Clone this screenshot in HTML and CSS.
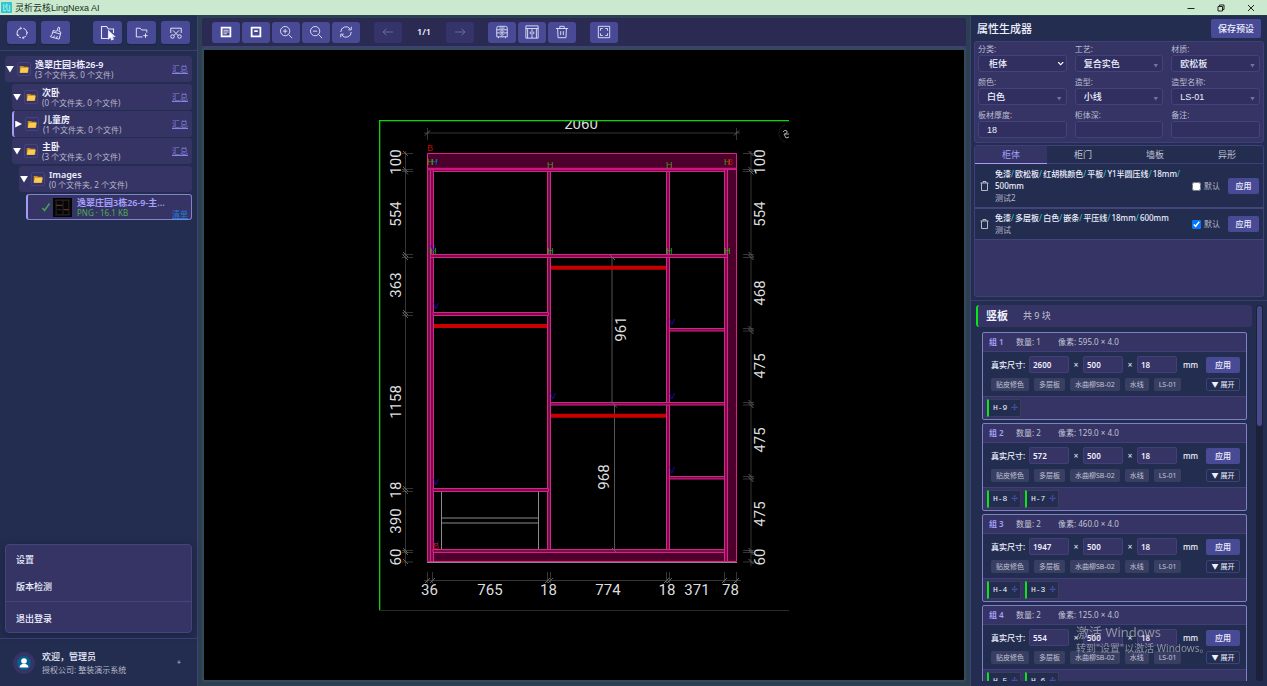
FILE: index.html
```html
<!DOCTYPE html>
<html lang="zh-CN">
<head>
<meta charset="utf-8">
<title>灵析云核LingNexa AI</title>
<link rel="stylesheet" href="styles.css">
</head>
<body>
<header class="titlebar">
  <svg class="app-logo" viewBox="0 0 12 12"><rect width="12" height="12" rx="1" fill="#35c4cf"/><path d="M3 2v8M3 9.500h2.500M6.500 2l-2 4M6.500 2.500v6l3 1.500V3.500" stroke="#a9f2f1" fill="none"/></svg>
  <span class="app-name">灵析云核LingNexa AI</span>
  <div class="window-controls">
    <button aria-label="最小化"><svg viewBox="0 0 10 10"><path d="M1.500 5.500h7"/></svg></button>
    <button aria-label="还原"><svg viewBox="0 0 10 10"><path d="M2 3.500h4.500V8H2zM3.500 3.500V2H8v4.500H6.500"/></svg></button>
    <button aria-label="关闭"><svg viewBox="0 0 10 10"><path d="M2 2l6 6M8 2L2 8"/></svg></button>
  </div>
</header>
<div class="app">
  <aside class="sidebar">
    <div class="side-tools">
      <button aria-label="刷新"><svg viewBox="0 0 16 16"><path d="M3.200 11A5.600 5.600 0 0 1 7 2.500M9.500 2.600a5.600 5.600 0 0 1 3.700 7.400M12.700 11A5.600 5.600 0 0 1 9 13.500M6.800 13.500a5.600 5.600 0 0 1-2.500-1.200M6 1.200l1.500 1.300L6 4M10 15l-1.500-1.500L10 12M2 9.500l1.200 1.700 1.600-1M14.500 7l-1 1.500"/></svg></button>
      <button aria-label="清理"><svg viewBox="0 0 16 16"><path d="M9.500 5.500l.8-3.800q1.200-1 2 .3l-1 4.200 2.200.8-.4 2.200-8.800-2.400.6-1.800q2.500 1.500 4.600.5zM4.300 6.800Q4 10 1.500 12.200L11.500 15l1.600-5.800M5 13l1.500-2.200M8.500 14l1-2.500"/></svg></button>
      <button class="side-gap" aria-label="打开文件夹"><svg class="wide" viewBox="0 0 16 16"><path d="M8.500 13.500h-7v-12h5l2 2.500h5v4"/><path class="solid" d="M8.500 6l6 5.500-2.300.2 1 2.500-1.500.6-1.100-2.500-2.100 1.500z"/></svg></button>
      <button aria-label="新建文件夹"><svg viewBox="0 0 16 16"><path d="M8.500 12.500h-7v-10h4.500l1.500 2h6v3M12 8.500v5M9.500 11h5"/></svg></button>
      <button aria-label="剪切"><svg viewBox="0 0 16 16"><path d="M2 8V2.500h12V8M4.500 5l6 6M11.500 5l-6 6"/><circle cx="4" cy="12" r="2"/><circle cx="12" cy="12" r="2"/></svg></button>
    </div>
    <ul class="tree">
      <li>
        <div class="node"><i class="caret open"></i><svg class="folder" viewBox="0 0 14 14"><path d="M2 3.500h4l1 1h5v7H2z" fill="#c98c1d"/><path d="M3.500 5.500h9L11 11.500H2z" fill="#fccb57"/></svg><div class="node-text"><b>逸翠庄园3栋26-9</b><span>(3 个文件夹, 0 个文件)</span></div><a href="#">汇总</a></div>
        <ul>
          <li><div class="node"><i class="caret open"></i><svg class="folder" viewBox="0 0 14 14"><path d="M2 3.500h4l1 1h5v7H2z" fill="#c98c1d"/><path d="M3.500 5.500h9L11 11.500H2z" fill="#fccb57"/></svg><div class="node-text"><b>次卧</b><span>(0 个文件夹, 0 个文件)</span></div><a href="#">汇总</a></div></li>
          <li><div class="node current"><i class="caret"></i><svg class="folder" viewBox="0 0 14 14"><path d="M2 3.500h4l1 1h5v7H2z" fill="#c98c1d"/><path d="M3.500 5.500h9L11 11.500H2z" fill="#fccb57"/></svg><div class="node-text"><b>儿童房</b><span>(1 个文件夹, 0 个文件)</span></div><a href="#">汇总</a></div></li>
          <li>
            <div class="node"><i class="caret open"></i><svg class="folder" viewBox="0 0 14 14"><path d="M2 3.500h4l1 1h5v7H2z" fill="#c98c1d"/><path d="M3.500 5.500h9L11 11.500H2z" fill="#fccb57"/></svg><div class="node-text"><b>主卧</b><span>(3 个文件夹, 0 个文件)</span></div><a href="#">汇总</a></div>
            <ul>
              <li>
                <div class="node"><i class="caret open"></i><svg class="folder" viewBox="0 0 14 14"><path d="M2 3.500h4l1 1h5v7H2z" fill="#c98c1d"/><path d="M3.500 5.500h9L11 11.500H2z" fill="#fccb57"/></svg><div class="node-text"><b>Images</b><span>(0 个文件夹, 2 个文件)</span></div></div>
                <ul>
                  <li><div class="node file"><svg class="tick" viewBox="0 0 10 10"><path d="M1.500 6l2 2.500L8.500 1.500"/></svg><svg class="thumb" viewBox="0 0 18 18"><rect width="18" height="18" fill="#050505"/><path d="M2 2h14M2 16h14M3 2v14M9.500 2v14M15 2v14M4 11h4" stroke="#242424" fill="none"/><path d="M3 7h6M10 11h5" stroke="#64322c" fill="none"/></svg><div class="node-text"><b>逸翠庄园3栋26-9-主...</b><span>PNG · 16.1 KB</span></div><a href="#">清单</a></div></li>
                </ul>
              </li>
            </ul>
          </li>
        </ul>
      </li>
    </ul>
    <nav class="menu">
      <button>设置</button>
      <button>版本检测</button>
      <button class="logout">退出登录</button>
    </nav>
    <div class="user">
      <svg class="avatar" viewBox="0 0 22 22"><circle cx="11" cy="11" r="11" fill="#353464"/><circle cx="11" cy="11" r="7" fill="#075d8d"/><circle cx="11" cy="9" r="2.800" fill="#fff"/><path d="M6.500 15.500c0-5 9-5 9 0z" fill="#fff"/></svg>
      <div class="user-text"><strong>欢迎，管理员</strong><span>授权公司: 整装演示系统</span></div>
      <svg class="user-caret" viewBox="0 0 6 6"><path d="M3 0v2M1.500 2h3L3 3.500z" stroke="#8e93b1" stroke-width=".7" fill="#8e93b1"/></svg>
    </div>
  </aside>

  <main class="stage">
    <div class="toolbar">
      <button aria-label="列表"><svg viewBox="0 0 16 16"><path class="heavy" d="M3 3h10v10H3z"/><path d="M5 6h6M5 8h6M5 10h4"/></svg></button>
      <button aria-label="归档"><svg viewBox="0 0 16 16"><path class="heavy" d="M3 3h10v10H3zM6 7h4"/></svg></button>
      <button aria-label="放大"><svg viewBox="0 0 16 16"><circle cx="7" cy="7" r="5.300"/><path d="M11 11l4 4M4.500 7h5M7 4.500v5"/></svg></button>
      <button aria-label="缩小"><svg viewBox="0 0 16 16"><circle cx="7" cy="7" r="5.300"/><path d="M11 11l4 4M4.500 7h5"/></svg></button>
      <button aria-label="重置"><svg viewBox="0 0 16 16"><path d="M2 8a6 6 0 0 1 11-3.300M14 8a6 6 0 0 1-11 3.300M14 2v3.500h-3.500M2 14v-3.500h3.500"/></svg></button>
      <button class="tool-gap" disabled aria-label="上一张"><svg viewBox="0 0 16 16"><path d="M14.500 8h-13M6 3.500L1.500 8 6 12.500"/></svg></button>
      <span class="pager">1/1</span>
      <button disabled aria-label="下一张"><svg viewBox="0 0 16 16"><path d="M1.500 8h13M10 3.500L14.500 8 10 12.500"/></svg></button>
      <button class="tool-gap" aria-label="柜体"><svg viewBox="0 0 16 16"><path d="M4 1.500h8q2 0 2 2v10H2v-10q0-2 2-2zM2 5.500h12M2 9h12M8 5.500v8M4 13.500V15M12 13.500V15M5.500 7.200h1M9.500 7.200h1M5.500 11h1M9.500 11h1M5 3.500h6"/></svg></button>
      <button aria-label="柜门"><svg viewBox="0 0 16 16"><path d="M1 1h14v14H1zM1 4h14M8 4v11M6 7.500v3M10 7.500v3M3 4v11M13 4v11"/></svg></button>
      <button aria-label="删除"><svg viewBox="0 0 16 16"><path d="M1 4h14M5.500 4V1.500h5V4M3 4l.5 10.500h9L13 4M6.500 7v4.500M9.500 7v4.500"/></svg></button>
      <button class="tool-gap" aria-label="全屏"><svg viewBox="0 0 16 16"><path d="M1.500 1.500h13v13h-13zM4 6.500V4h2.500M9.500 4H12v2.500M12 9.500V12H9.500M6.500 12H4V9.500"/></svg></button>
    </div>
    <div class="viewer">
      <svg class="drawing" viewBox="379 120 410 491" role="img" aria-label="柜体立面图">
        <g class="guide">
          <path d="M379 610.500H789" class="faint"/>
          <path d="M424 133H740M427.500 128v12M736.500 128v12M405.500 151v415M751 151v415M424 580.500H741"/>
          <path d="M402 153.500h11M402 169.500h11M402 171.500h11M402 254.500h11M402 257.500h11M402 312.500h11M402 315.500h11M402 488.500h11M402 491.500h11M402 550.500h11M402 552.500h11M402 562h11"/>
          <path d="M743 153.500h11M743 169.500h11M743 171.500h11M743 254.500h11M743 257.500h11M743 328.500h11M743 331h11M743 402.500h11M743 405h11M743 476.500h11M743 479h11M743 550.500h11M743 552.500h11M743 562h11"/>
          <path d="M427.500 572v11M432.500 572v11M547.500 572v11M550.500 572v11M666.500 572v11M669.500 572v11M724.500 572v11M736.500 572v11"/>
          <path d="M612 256v148M614.500 404v146" class="mid"/>
        </g>
        <path class="slash" d="M425 135.500l5-5M734 135.500l5-5M403 151l5 5M403 167l5 5M403 169.500l5 5M403 252l5 5M403 255l5 5M403 310l5 5M403 313l5 5M403 486l5 5M403 489l5 5M403 548l5 5M403 550l5 5M403 559l5 5M748.500 151l5 5M748.500 167l5 5M748.500 169.500l5 5M748.500 252l5 5M748.500 255l5 5M748.500 326l5 5M748.500 329l5 5M748.500 400l5 5M748.500 403l5 5M748.500 474l5 5M748.500 477l5 5M748.500 548l5 5M748.500 550l5 5M748.500 559l5 5M425 583l5-5M430 583l5-5M545 583l5-5M548 583l5-5M664 583l5-5M667 583l5-5M722 583l5-5M734 583l5-5"/>
        <path class="drawer" d="M441.500 491v59M538.500 491v59M441.500 518H538.500M441.500 523H538.500M427 562.500H737M736.500 154v16"/>
        <path class="rail" d="M433 326h115M550 267.700h116M550 415.700h116"/>
        <path class="board-dark" d="M427.500 153.500h309v15.500h-309zM727.500 169.500h9v392h-9zM433 552.500h291.500v9H433z"/>
        <g class="board">
          <path d="M427.500 169.500h3v392h-3zM430.500 169.500h3v392h-3zM724.500 169.500h3v392h-3z"/>
          <path d="M433 169h291.500v2.500H433z"/>
          <path d="M547.500 171.500h3V550h-3zM666.500 171.500h3V550h-3z"/>
          <path d="M430.500 254.500h297v3h-297zM433 312.500h115.500v3H433zM433 488.500h115.500v3H433zM550.500 402.500h174v2.500h-174zM669.500 328.500h55v2.500h-55zM669.500 476.500h55v2.500h-55zM433 549.500h291.500v3H433z"/>
        </g>
        <path class="slash" d="M610 255l5 5M611 401.500l6 6M612 548l4 4"/>
        <path d="M427.500 168.700h309" stroke="#ce1682" stroke-width="2"/>
        <g class="tag-h"><text x="427" y="165">H</text><text x="431" y="165">H</text><text x="547" y="168">H</text><text x="666" y="168">H</text><text x="724" y="165">H</text></g>
        <g class="tag-h bright"><text x="430" y="254">H</text><text x="547" y="254">H</text><text x="666" y="254">H</text><text x="724" y="254">H</text></g>
        <g class="tag-v"><text x="433" y="165">V</text><text x="430" y="251">V</text><text x="433" y="309">V</text><text x="433" y="485">V</text><text x="433" y="547">V</text><text x="550" y="399">V</text><text x="669" y="325">V</text><text x="669" y="399">V</text><text x="669" y="473">V</text></g>
        <g class="tag-b"><text x="427" y="151">B</text><text x="727" y="165">B</text><text x="433" y="549">B</text></g>
        <g class="dim">
          <text x="581" y="129">2060</text>
          <text x="429.500" y="595">36</text><text x="490" y="595">765</text><text x="548.500" y="595">18</text><text x="608" y="595">774</text><text x="667" y="595">18</text><text x="697" y="595">371</text><text x="730.500" y="595">78</text>
          <text transform="translate(401 162) rotate(-90)">100</text>
          <text transform="translate(401 214) rotate(-90)">554</text>
          <text transform="translate(401 285) rotate(-90)">363</text>
          <text transform="translate(401 402) rotate(-90)">1158</text>
          <text transform="translate(401 490) rotate(-90)">18</text>
          <text transform="translate(401 521) rotate(-90)">390</text>
          <text transform="translate(401 557) rotate(-90)">60</text>
          <text transform="translate(765 162) rotate(-90)">100</text>
          <text transform="translate(765 214) rotate(-90)">554</text>
          <text transform="translate(765 293) rotate(-90)">468</text>
          <text transform="translate(765 366) rotate(-90)">475</text>
          <text transform="translate(765 440) rotate(-90)">475</text>
          <text transform="translate(765 514) rotate(-90)">475</text>
          <text transform="translate(765 557) rotate(-90)">60</text>
          <text transform="translate(626 329) rotate(-90)">961</text>
          <text transform="translate(609 477) rotate(-90)">968</text>
        </g>
        <path d="M379 117h410v3.500H379z" fill="#000"/>
        <path d="M789 120.500H379.500V610" stroke="#0bd60b" stroke-width="1.600" fill="none"/>
        <path d="M785 125a9 9 0 0 0 0 17" stroke="#1c1c1c" fill="none"/>
        <path d="M783 132q2-3 4-1q1 2-2 3M789 134h-5l2 4 3-1" stroke="#aaa" fill="none"/>
      </svg>
    </div>
  </main>

  <aside class="panel">
    <div class="panel-head"><h2>属性生成器</h2><button class="btn save">保存预设</button></div>
    <form class="form">
      <div class="field"><label for="f1">分类:</label><div class="pick chevron"><select id="f1"><option>柜体</option></select></div></div>
      <div class="field"><label for="f2">工艺:</label><div class="pick"><select id="f2"><option>复合实色</option></select></div></div>
      <div class="field"><label for="f3">材质:</label><div class="pick"><select id="f3"><option>欧松板</option></select></div></div>
      <div class="field"><label for="f4">颜色:</label><div class="pick"><select id="f4"><option>白色</option></select></div></div>
      <div class="field"><label for="f5">造型:</label><div class="pick"><select id="f5"><option>小线</option></select></div></div>
      <div class="field"><label for="f6">造型名称:</label><div class="pick"><select id="f6"><option>LS-01</option></select></div></div>
      <div class="field"><label for="f7">板材厚度:</label><input id="f7" value="18"></div>
      <div class="field"><label for="f8">柜体深:</label><input id="f8"></div>
      <div class="field"><label for="f9">备注:</label><input id="f9"></div>
    </form>
    <section class="presets">
      <div class="tabs"><button class="active">柜体</button><button>柜门</button><button>墙板</button><button>异形</button></div>
      <div class="preset">
        <button class="bin" aria-label="删除预设"><svg viewBox="0 0 10 12"><path d="M1 3h8M3.500 3V1.500h3V3M2 3v7.500h6V3"/></svg></button>
        <div class="preset-text"><p>免漆<i>/</i>欧松板<i>/</i>红胡桃颜色<i>/</i>平板<i>/</i>Y1半圆压线<i>/</i>18mm<i>/</i><wbr>500mm</p><span>测试2</span></div>
        <label><input type="checkbox">默认</label><button class="btn">应用</button>
      </div>
      <div class="preset">
        <button class="bin" aria-label="删除预设"><svg viewBox="0 0 10 12"><path d="M1 3h8M3.500 3V1.500h3V3M2 3v7.500h6V3"/></svg></button>
        <div class="preset-text"><p>免漆<i>/</i>多层板<i>/</i>白色<i>/</i>嵌条<i>/</i>平压线<i>/</i>18mm<i>/</i>600mm</p><span>测试</span></div>
        <label><input type="checkbox" checked>默认</label><button class="btn">应用</button>
      </div>
    </section>
    <section class="results">
      <div class="scroll">
        <div class="list-head"><h3>竖板</h3><span>共 9 块</span></div>
        <article class="group">
          <header><b>组 1</b><span class="qty">数量: 1</span><span>像素: 595.0 × 4.0</span></header>
          <div class="group-body">
            <div class="size"><span>真实尺寸:</span><input aria-label="长" value="2600"><i>×</i><input aria-label="宽" value="500"><i>×</i><input aria-label="厚" value="18"><span class="unit">mm</span><button class="btn">应用</button></div>
            <div class="tags"><span>贴皮修色</span><span>多层板</span><span>水曲柳SB-02</span><span>水线</span><span>LS-01</span><button class="more">▼ 展开</button></div>
          </div>
          <footer><span class="chip">H-9<em>✢</em></span></footer>
        </article>
        <article class="group">
          <header><b>组 2</b><span class="qty">数量: 2</span><span>像素: 129.0 × 4.0</span></header>
          <div class="group-body">
            <div class="size"><span>真实尺寸:</span><input aria-label="长" value="572"><i>×</i><input aria-label="宽" value="500"><i>×</i><input aria-label="厚" value="18"><span class="unit">mm</span><button class="btn">应用</button></div>
            <div class="tags"><span>贴皮修色</span><span>多层板</span><span>水曲柳SB-02</span><span>水线</span><span>LS-01</span><button class="more">▼ 展开</button></div>
          </div>
          <footer><span class="chip">H-8<em>✢</em></span><span class="chip">H-7<em>✢</em></span></footer>
        </article>
        <article class="group">
          <header><b>组 3</b><span class="qty">数量: 2</span><span>像素: 460.0 × 4.0</span></header>
          <div class="group-body">
            <div class="size"><span>真实尺寸:</span><input aria-label="长" value="1947"><i>×</i><input aria-label="宽" value="500"><i>×</i><input aria-label="厚" value="18"><span class="unit">mm</span><button class="btn">应用</button></div>
            <div class="tags"><span>贴皮修色</span><span>多层板</span><span>水曲柳SB-02</span><span>水线</span><span>LS-01</span><button class="more">▼ 展开</button></div>
          </div>
          <footer><span class="chip">H-4<em>✢</em></span><span class="chip">H-3<em>✢</em></span></footer>
        </article>
        <article class="group">
          <header><b>组 4</b><span class="qty">数量: 2</span><span>像素: 125.0 × 4.0</span></header>
          <div class="group-body">
            <div class="size"><span>真实尺寸:</span><input aria-label="长" value="554"><i>×</i><input aria-label="宽" value="500"><i>×</i><input aria-label="厚" value="18"><span class="unit">mm</span><button class="btn">应用</button></div>
            <div class="tags"><span>贴皮修色</span><span>多层板</span><span>水曲柳SB-02</span><span>水线</span><span>LS-01</span><button class="more">▼ 展开</button></div>
          </div>
          <footer><span class="chip">H-5<em>✢</em></span><span class="chip">H-6<em>✢</em></span></footer>
        </article>
      </div>
      <div class="track"><div class="grip"></div></div>
    </section>
  </aside>
</div>
<div class="watermark"><strong>激活 Windows</strong><span>转到"设置"以激活 Windows。</span></div>
</body>
</html>
```
FILE: styles.css
```css
* { box-sizing: border-box; }
body {
  margin: 0; height: 100vh; overflow: hidden; display: flex; flex-direction: column;
  background: #2c4052; color: #eef0ff;
  font-family: "Noto Sans", "Noto Sans CJK SC", sans-serif; font-size: 8px; line-height: 10px;
}
button, input, select { font: inherit; color: inherit; margin: 0; padding: 0; border: 0; background: none; }
button { cursor: pointer; }
ul { list-style: none; margin: 0; padding: 0; }
h2, h3, p { margin: 0; }
i, em { font-style: normal; }
svg { display: block; fill: none; }

.titlebar { display: flex; align-items: center; height: 15px; flex: none; background: #cbe9ce; color: #17301d; padding-left: 1px; }
.app-logo { width: 11px; height: 11px; }
.app-name { margin-left: 3px; font-family: "Liberation Sans", "Noto Sans CJK SC", sans-serif; font-size: 9px; }
.window-controls { margin-left: auto; display: flex; padding-right: 1px; }
.window-controls button { width: 30px; display: grid; place-items: center; }
.window-controls svg { width: 10px; height: 10px; stroke: #222; }

.app { flex: 1; min-height: 0; display: flex; }

.sidebar { width: 198px; flex: none; display: flex; flex-direction: column; background: #232d4f; border-right: 1px solid #3f4274; border-top: 1px solid #26394b; }
.side-tools { display: flex; gap: 5px; padding: 5px 6px 6px 7px; border-bottom: 1px solid #3a3d74; }
.side-tools button { width: 29px; height: 23px; display: grid; place-items: center; background: #484a96; border-radius: 3px; box-shadow: 0 1px 1px #1b2343; }
.side-tools .side-gap { margin-left: 18px; }
.side-tools svg { width: 14px; height: 14px; stroke: #e4e4fa; stroke-width: 1.1; }
.side-tools .wide { width: 16px; height: 16px; }
.side-tools .solid { fill: #fff; }

.tree { padding: 5px 5px 0; }
.tree ul { padding-left: 7px; margin-top: 2px; }
.tree li + li { margin-top: 1px; }
.node { display: flex; align-items: center; height: 26px; padding-right: 4px; background: #353464; border-radius: 3px; }
.caret { width: 8px; height: 7px; margin: 0 3px 0 1px; background: #fff; clip-path: polygon(15% 0, 100% 50%, 15% 100%); }
.caret.open { clip-path: polygon(0 5%, 100% 5%, 50% 100%); }
.folder { width: 14px; height: 14px; border: 1px solid #45437f; border-radius: 2px; margin-right: 4px; }
.node.current { border-left: 2px solid #a39bf5; }
.node.current .caret { margin-left: 0; }
.node-text { flex: 1; display: flex; flex-direction: column; white-space: nowrap; }
.node-text b { font-size: 9px; font-weight: 600; line-height: 11px; }
.node-text span { color: #b9b9cc; }
.node a { color: #8585df; text-underline-offset: 1px; }
.node.file { border: 1px solid #8383cd; border-left: 2px solid #a39bf5; padding-right: 3px; }
.tick { width: 10px; height: 10px; margin-left: 13px; stroke: #3fa64b; stroke-width: 1.5; }
.thumb { width: 19px; height: 19px; margin: 0 5px 0 2px; }
.file b { color: #a6a0fb; }
.file .node-text span { color: #4cad52; }
.file a { color: #2478d4; align-self: flex-end; }

.menu { margin: auto 5px 5px; display: flex; flex-direction: column; background: #353464; border: 1px solid #45447c; border-radius: 4px; box-shadow: 0 2px 8px #1a2340; }
.menu button { text-align: left; padding: 2px 10px 0; height: 27px; font-size: 9px; font-weight: 500; }
.menu .logout { margin-top: 2px; padding-top: 4px; border-top: 1px solid #45447c; height: 31px; }
.user { display: flex; align-items: center; height: 48px; padding: 0 15px 0 13px; border-top: 1px solid #3a3d74; }
.avatar { width: 22px; height: 22px; margin-right: 7px; }
.user-text { flex: 1; display: flex; flex-direction: column; gap: 2px; }
.user-text strong { font-size: 9px; font-weight: 500; line-height: 12px; }
.user-text span { color: #b9b9cc; }
.user-caret { width: 6px; height: 6px; }

.stage { flex: 1; min-width: 0; display: flex; flex-direction: column; padding: 3px 4px 4px 4px; }
.toolbar { display: flex; align-items: center; gap: 2px; height: 29px; flex: none; padding-left: 10px; background: #2b2a53; border-bottom: 1px solid #413f7b; }
.toolbar button { width: 28px; height: 21px; display: grid; place-items: center; background: #484a96; border-radius: 3px; }
.toolbar svg { width: 14px; height: 14px; stroke: #dcdcf7; stroke-width: 1.1; }
.toolbar .heavy { stroke-width: 2; stroke: #fff; }
.toolbar .tool-gap { margin-left: 12px; }
.toolbar button:disabled { background: #34346a; }
.toolbar button:disabled svg { width: 12px; height: 12px; stroke: #77779c; }
.pager { width: 40px; text-align: center; font-size: 9px; font-weight: 600; }
.viewer { flex: 1; min-height: 0; display: grid; place-items: center; background: #000; border: 2px solid #34495e; border-top-width: 3px; border-radius: 3px; }
.drawing { width: 410px; height: 491px; }
.guide { stroke: #353535; }
.guide .faint { stroke: #292929; }
.guide .mid { stroke: #555; }
.slash { stroke: #626262; }
.drawer { stroke: #8b8b8b; }
.rail { stroke: #c80000; stroke-width: 4; }
.board { fill: #75104a; stroke: #dc218b; }
.board-dark { fill: #4d002b; stroke: #dc218b; }
.dim { fill: #dedede; font: 15px Roboto, sans-serif; text-anchor: middle; }
.tag-h, .tag-v, .tag-b { font: 9px "Liberation Sans", sans-serif; fill: #45951f; }
.tag-h.bright { fill: #10b918; }
.tag-v { fill: #1010b8; }
.tag-b { fill: #c40808; }

.panel { width: 297px; flex: none; display: flex; flex-direction: column; background: #232d4f; border-left: 1px solid #3f4274; padding-left: 3px; border-top: 1px solid #26394b; }
.panel-head { display: flex; align-items: center; justify-content: space-between; height: 25px; padding: 0 6px 0 3px; }
.panel-head h2 { font-size: 11px; font-weight: 500; }
.btn { width: 34px; height: 16px; display: grid; place-items: center; background: #484a96; border-radius: 2px; font-weight: 500; }
.btn.save { width: 50px; height: 19px; font-size: 9px; }
.form { display: grid; grid-template-columns: repeat(3, 1fr); gap: 5px 8px; margin: 0 3px 2px 0; padding: 2px 3px 4px; background: #353464; border: 1px solid #413f79; border-radius: 3px; }
.field { display: grid; gap: 1px; min-width: 0; }
.field label { color: #bcbcd2; }
.pick { display: grid; align-items: center; }
.pick select, .pick::after { grid-area: 1 / 1; }
.pick::after { content: ""; justify-self: end; width: 5px; height: 4px; margin: 4px 5px 0 0; background: #74749a; clip-path: polygon(0 0, 100% 0, 50% 100%); pointer-events: none; }
.pick.chevron::after { width: 6px; height: 4px; margin-top: 0; margin-right: 3px; background: #fff; clip-path: polygon(0 25%, 15% 0, 50% 60%, 85% 0, 100% 25%, 50% 100%); }
.field select, .field input { appearance: none; width: 100%; height: 17px; padding: 0 8px; font-family: "Liberation Sans", "Noto Sans CJK SC", sans-serif; font-size: 9px; font-weight: 500; background: #302f5f; border: 1px solid #43427c; border-radius: 3px; outline: 0; }
.field .chevron select { padding-left: 10px; }

.presets { margin-right: 3px; height: 152px; flex: none; background: #353464; border: 1px solid #413f79; border-radius: 3px; overflow: hidden; }
.tabs { display: grid; grid-template-columns: repeat(4, 1fr); background: #232d4f; }
.tabs button { height: 18px; font-size: 9px; color: #c2c3d5; border-bottom: 1px solid #413f79; }
.tabs .active { color: #a6a0fb; background: #353464; border-bottom-color: #a39bf5; }
.preset { display: flex; align-items: center; padding: 4px 4px 3px 4px; background: #232d4f; border-bottom: 1px solid #45447c; line-height: 12px; }
.preset + .preset { border-top: 1px solid #45447c; padding-top: 3px; }
.bin svg { width: 11px; height: 12px; stroke: #b9b9cc; }
.preset-text { flex: 1; min-width: 0; padding: 0 8px 0 5px; }
.preset-text p { font-weight: 500; }
.preset-text i { color: #25bac4; padding: 0 1px 0 0; }
.preset-text span, .preset label { color: #b9b9cc; }
.preset label { display: flex; align-items: center; gap: 3px; margin-right: 8px; }
.preset input { width: 9px; height: 9px; }
.preset .btn { width: 31px; }

.results { flex: 1; min-height: 0; display: flex; justify-content: space-between; margin: 3px 0 0 -3px; padding: 4px 4px 5px 5px; border-top: 1px solid #3a3d74; }
.scroll { width: 276px; overflow: hidden; }
.list-head { display: flex; align-items: center; gap: 15px; height: 22px; padding-left: 8px; margin-bottom: 5px; background: #353464; border-left: 2px solid #0de318; border-radius: 3px; }
.list-head h3 { font-size: 11px; font-weight: 700; }
.list-head span { font-size: 9px; color: #c2c3d5; }
.group { margin: 0 5px 3px 6px; border: 1px solid #7f7fc5; border-radius: 2px; background: #353464; }
.group header { display: flex; align-items: center; height: 19px; padding-left: 6px; border-bottom: 1px solid #413f79; color: #c2c3d5; }
.group header b { color: #a6a0fb; font-weight: 600; width: 27px; }
.group .qty { width: 42px; }
.group-body { display: grid; gap: 5px; padding: 4px 6px 5px 8px; background: #232d4f; }
.size { display: flex; align-items: center; height: 17px; white-space: nowrap; }
.size > span { width: 38px; font-weight: 500; }
.size input { width: 40px; height: 17px; padding: 0 3px; background: #353464; border: 1px solid #413f79; border-radius: 2px; font-weight: 600; outline: 0; }
.size i { width: 14px; text-align: center; }
.size .unit { width: auto; padding-left: 6px; }
.size .btn { margin-left: auto; }
.tags { display: flex; align-items: center; gap: 5px; white-space: nowrap; font-size: 7px; }
.tags span { height: 13px; line-height: 13px; padding: 0 5px; background: #383f62; border-radius: 2px; color: #c2c3d5; }
.more { width: 34px; height: 13px; line-height: 10px; margin-left: auto; border: 1px solid #413f79; border-radius: 2px; }
.group footer { display: flex; gap: 4px; padding: 2px 4px; border-top: 1px solid #413f79; }
.chip { display: flex; align-items: center; justify-content: space-between; width: 34px; height: 18px; padding: 0 2px 0 4px; background: #232d4f; border: 1px solid #3c3d5c; border-left: 2px solid #0de318; font-family: "Liberation Mono", monospace; }
.chip em { font-family: "DejaVu Sans", sans-serif; color: #5555bb; }
.track { width: 7px; background: #1d2038; border-radius: 4px; padding: 1px; }
.grip { height: 32%; background: #484a8a; border-radius: 3px; }

.watermark { position: fixed; right: 60px; bottom: 31px; display: flex; flex-direction: column; width: 131px; gap: 1px; color: #a5a8b3; opacity: .8; pointer-events: none; white-space: nowrap; }
.watermark strong { font-size: 13px; font-weight: 400; line-height: 16px; }
.watermark span { font-size: 10px; line-height: 14px; }
```
